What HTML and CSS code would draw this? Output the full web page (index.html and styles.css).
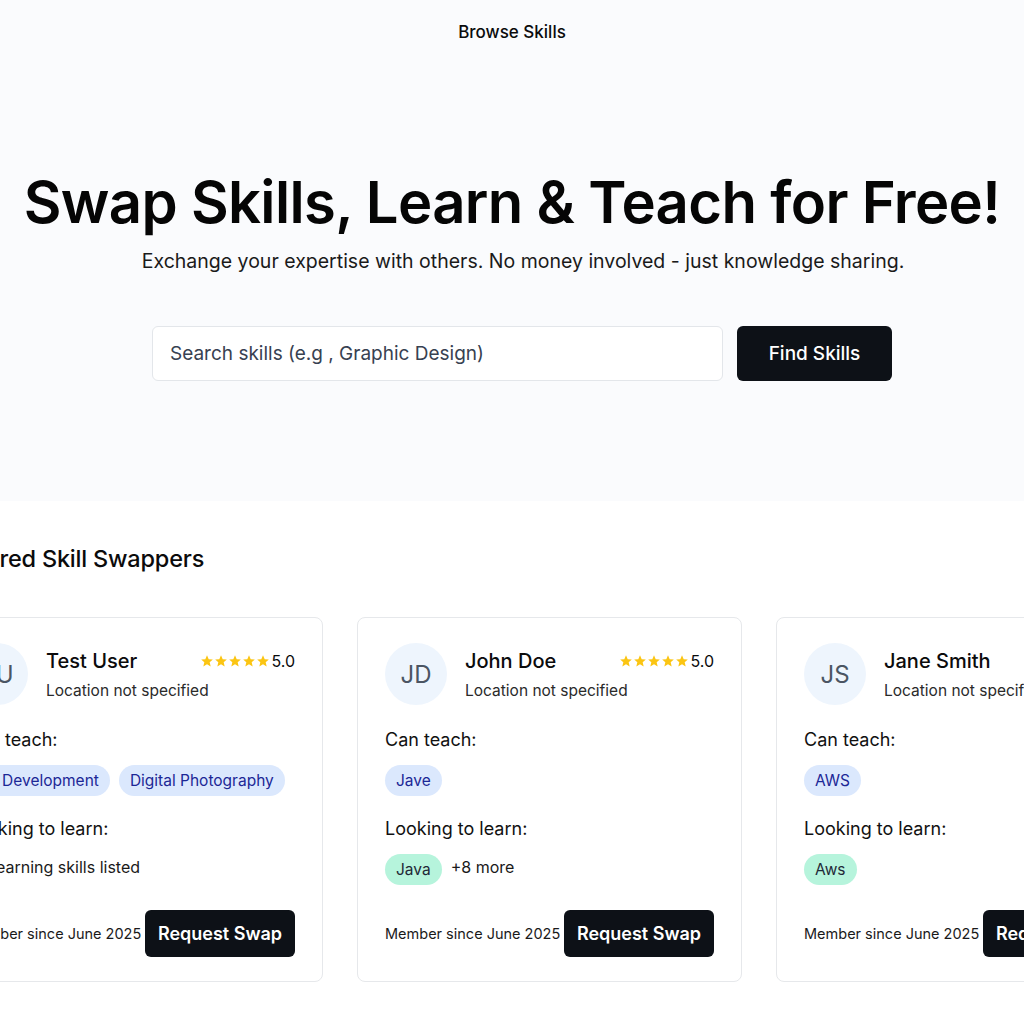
FILE: index.html
```html
<!DOCTYPE html>
<html lang="en">
<head>
<meta charset="utf-8">
<title>Browse Skills</title>
<link rel="stylesheet" href="styles.css">
</head>
<body>
<header class="topbar">Browse Skills</header>

<section class="hero">
  <h1 class="hero-title">Swap Skills, Learn &amp; Teach for Free!</h1>
  <p class="hero-sub">Exchange your expertise with others. No money involved - just knowledge sharing.</p>
  <form class="search">
    <input class="search-input" type="text" placeholder="Search skills (e.g , Graphic Design)">
    <button class="search-btn" type="button">Find Skills</button>
  </form>
</section>

<section class="featured">
  <h2 class="featured-title">Featured Skill Swappers</h2>
  <div class="cards">
    <article class="card">
      <div class="card-top">
        <div class="avatar">TU</div>
        <div class="who">
          <div class="name-row">
            <div class="name">Test User</div>
            <div class="rating">
              <span class="stars">
                <svg viewBox="0 0 24 24"><path d="M12 2l2.9 6.9 7.1.6-5.4 4.7 1.7 7.3L12 17.6 5.7 21.5l1.7-7.3L2 9.5l7.1-.6z"/></svg><svg viewBox="0 0 24 24"><path d="M12 2l2.9 6.9 7.1.6-5.4 4.7 1.7 7.3L12 17.6 5.7 21.5l1.7-7.3L2 9.5l7.1-.6z"/></svg><svg viewBox="0 0 24 24"><path d="M12 2l2.9 6.9 7.1.6-5.4 4.7 1.7 7.3L12 17.6 5.7 21.5l1.7-7.3L2 9.5l7.1-.6z"/></svg><svg viewBox="0 0 24 24"><path d="M12 2l2.9 6.9 7.1.6-5.4 4.7 1.7 7.3L12 17.6 5.7 21.5l1.7-7.3L2 9.5l7.1-.6z"/></svg><svg viewBox="0 0 24 24"><path d="M12 2l2.9 6.9 7.1.6-5.4 4.7 1.7 7.3L12 17.6 5.7 21.5l1.7-7.3L2 9.5l7.1-.6z"/></svg>
              </span>5.0
            </div>
          </div>
          <div class="loc">Location not specified</div>
        </div>
      </div>
      <div class="label">Can teach:</div>
      <div class="chips">
        <span class="chip chip-teach">3D Development</span>
        <span class="chip chip-teach">Digital Photography</span>
      </div>
      <div class="label">Looking to learn:</div>
      <div class="chips">
        <span class="none">No learning skills listed</span>
      </div>
      <div class="card-foot">
        <span class="since">Member since June 2025</span>
        <button class="swap-btn" type="button">Request Swap</button>
      </div>
    </article>

    <article class="card">
      <div class="card-top">
        <div class="avatar">JD</div>
        <div class="who">
          <div class="name-row">
            <div class="name">John Doe</div>
            <div class="rating">
              <span class="stars">
                <svg viewBox="0 0 24 24"><path d="M12 2l2.9 6.9 7.1.6-5.4 4.7 1.7 7.3L12 17.6 5.7 21.5l1.7-7.3L2 9.5l7.1-.6z"/></svg><svg viewBox="0 0 24 24"><path d="M12 2l2.9 6.9 7.1.6-5.4 4.7 1.7 7.3L12 17.6 5.7 21.5l1.7-7.3L2 9.5l7.1-.6z"/></svg><svg viewBox="0 0 24 24"><path d="M12 2l2.9 6.9 7.1.6-5.4 4.7 1.7 7.3L12 17.6 5.7 21.5l1.7-7.3L2 9.5l7.1-.6z"/></svg><svg viewBox="0 0 24 24"><path d="M12 2l2.9 6.9 7.1.6-5.4 4.7 1.7 7.3L12 17.6 5.7 21.5l1.7-7.3L2 9.5l7.1-.6z"/></svg><svg viewBox="0 0 24 24"><path d="M12 2l2.9 6.9 7.1.6-5.4 4.7 1.7 7.3L12 17.6 5.7 21.5l1.7-7.3L2 9.5l7.1-.6z"/></svg>
              </span>5.0
            </div>
          </div>
          <div class="loc">Location not specified</div>
        </div>
      </div>
      <div class="label">Can teach:</div>
      <div class="chips">
        <span class="chip chip-teach">Jave</span>
      </div>
      <div class="label">Looking to learn:</div>
      <div class="chips">
        <span class="chip chip-learn">Java</span>
        <span class="more">+8 more</span>
      </div>
      <div class="card-foot">
        <span class="since">Member since June 2025</span>
        <button class="swap-btn" type="button">Request Swap</button>
      </div>
    </article>

    <article class="card">
      <div class="card-top">
        <div class="avatar">JS</div>
        <div class="who">
          <div class="name-row">
            <div class="name">Jane Smith</div>
            <div class="rating">
              <span class="stars">
                <svg viewBox="0 0 24 24"><path d="M12 2l2.9 6.9 7.1.6-5.4 4.7 1.7 7.3L12 17.6 5.7 21.5l1.7-7.3L2 9.5l7.1-.6z"/></svg><svg viewBox="0 0 24 24"><path d="M12 2l2.9 6.9 7.1.6-5.4 4.7 1.7 7.3L12 17.6 5.7 21.5l1.7-7.3L2 9.5l7.1-.6z"/></svg><svg viewBox="0 0 24 24"><path d="M12 2l2.9 6.9 7.1.6-5.4 4.7 1.7 7.3L12 17.6 5.7 21.5l1.7-7.3L2 9.5l7.1-.6z"/></svg><svg viewBox="0 0 24 24"><path d="M12 2l2.9 6.9 7.1.6-5.4 4.7 1.7 7.3L12 17.6 5.7 21.5l1.7-7.3L2 9.5l7.1-.6z"/></svg><svg viewBox="0 0 24 24"><path d="M12 2l2.9 6.9 7.1.6-5.4 4.7 1.7 7.3L12 17.6 5.7 21.5l1.7-7.3L2 9.5l7.1-.6z"/></svg>
              </span>5.0
            </div>
          </div>
          <div class="loc">Location not specified</div>
        </div>
      </div>
      <div class="label">Can teach:</div>
      <div class="chips">
        <span class="chip chip-teach">AWS</span>
      </div>
      <div class="label">Looking to learn:</div>
      <div class="chips">
        <span class="chip chip-learn">Aws</span>
      </div>
      <div class="card-foot">
        <span class="since">Member since June 2025</span>
        <button class="swap-btn" type="button">Request Swap</button>
      </div>
    </article>
  </div>
</section>
</body>
</html>
```

FILE: styles.css
```css
* { box-sizing: border-box; }

html, body {
  margin: 0;
  padding: 0;
  overflow: hidden;
}

body {
  width: 1024px;
  height: 1024px;
  background: #ffffff;
  color: #0b0b0c;
  font-family: Inter, "Liberation Sans", sans-serif;
}

.topbar {
  height: 64px;
  display: flex;
  align-items: center;
  justify-content: center;
  font-size: 17px;
  font-weight: 500;
  background: #fafbfd;
}

.hero {
  background: #fafbfd;
  height: 437px;
  padding-top: 103px;
  text-align: center;
}

.hero-title {
  margin: 0;
  font-size: 58px;
  font-weight: 600;
  letter-spacing: -0.65px;
  line-height: 70px;
  color: #050505;
}

.hero-sub {
  margin: 10px 0 0;
  padding-left: 22px;
  font-size: 19.5px;
  line-height: 28px;
  color: #1a1a1a;
}

.search {
  margin-top: 51px;
  display: flex;
  justify-content: center;
  gap: 14px;
}

.search-input {
  width: 571px;
  height: 55px;
  border: 1px solid #e3e6ea;
  border-radius: 6px;
  background: #ffffff;
  padding: 0 17px;
  font-family: inherit;
  font-size: 19px;
  color: #1f2937;
  margin-left: 20px;
}

.search-input::placeholder { color: #374151; }

.search-btn {
  width: 155px;
  height: 55px;
  border: 0;
  border-radius: 6px;
  background: #0d1117;
  color: #ffffff;
  font-family: inherit;
  font-size: 19px;
  font-weight: 500;
}

.featured {
  margin-left: -62px;
  padding-top: 43px;
}

.featured-title {
  margin: 0;
  font-size: 23.5px;
  font-weight: 500;
  line-height: 30px;
  letter-spacing: -0.2px;
}

.cards {
  margin-top: 43px;
  display: grid;
  grid-template-columns: 385px 385px 385px;
  gap: 34px;
}

.card {
  height: 365px;
  border: 1px solid #e6e8eb;
  border-radius: 8px;
  padding: 25px 27px 24px;
  display: flex;
  flex-direction: column;
}

.card-top {
  display: flex;
  align-items: flex-start;
}

.avatar {
  width: 62px;
  height: 62px;
  border-radius: 50%;
  background: #eef5fd;
  color: #4b5563;
  font-size: 24px;
  display: flex;
  align-items: center;
  justify-content: center;
  flex-shrink: 0;
}

.who {
  margin-left: 18px;
  padding-top: 4px;
  flex: 1;
  min-width: 0;
}

.name-row {
  display: flex;
  align-items: center;
  justify-content: space-between;
}

.name {
  font-size: 20px;
  font-weight: 500;
  line-height: 28px;
  white-space: nowrap;
}

.loc {
  margin-top: 5px;
  font-size: 15.5px;
  line-height: 22px;
  color: #2a2a2a;
  white-space: nowrap;
}

.rating {
  display: flex;
  align-items: center;
  font-size: 16px;
  line-height: 20px;
  white-space: nowrap;
}

.stars {
  display: flex;
  margin-right: 1px;
}

.stars svg {
  width: 14px;
  height: 14px;
  fill: #fbc513;
}

.label {
  margin-top: 20px;
  font-size: 18px;
  line-height: 26px;
  color: #111;
  white-space: nowrap;
}

.card-top + .label { margin-top: 22px; }

.chips {
  margin-top: 12px;
  display: flex;
  align-items: center;
  gap: 9px;
  height: 31px;
  white-space: nowrap;
}

.chip {
  height: 31px;
  padding: 0 11px;
  border-radius: 16px;
  display: inline-flex;
  align-items: center;
  font-size: 15.5px;
  flex-shrink: 0;
}

.chip-teach {
  background: #dbe8fd;
  color: #1c2796;
}

.chip-learn {
  background: #b6f4dc;
  color: #1f2937;
}

.more {
  font-size: 16px;
  color: #1a1a1a;
  padding-bottom: 5px;
}

.none {
  font-size: 16px;
  color: #1a1a1a;
  padding-bottom: 5px;
}

.card-foot {
  margin-top: auto;
  display: flex;
  align-items: center;
  justify-content: space-between;
}

.since {
  font-size: 14.5px;
  color: #1a1a1a;
  white-space: nowrap;
}

.swap-btn {
  height: 47px;
  width: 150px;
  border: 0;
  border-radius: 6px;
  background: #0d1117;
  color: #ffffff;
  font-family: inherit;
  font-size: 18px;
  font-weight: 600;
  flex-shrink: 0;
}
```
